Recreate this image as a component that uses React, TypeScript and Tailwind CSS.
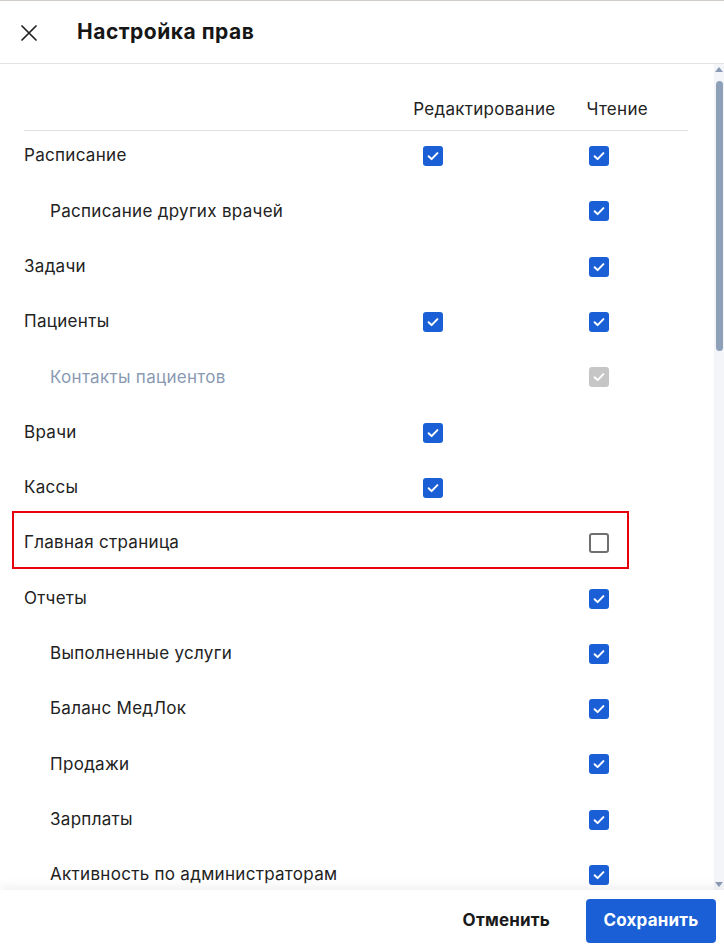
type Mark = 'on' | 'off' | 'disabled' | null;

interface PermRow {
  label: string;
  sub?: boolean;
  muted?: boolean;
  edit: Mark;
  read: Mark;
  highlight?: boolean;
}

const ROWS: PermRow[] = [
  { label: 'Расписание', edit: 'on', read: 'on' },
  { label: 'Расписание других врачей', sub: true, edit: null, read: 'on' },
  { label: 'Задачи', edit: null, read: 'on' },
  { label: 'Пациенты', edit: 'on', read: 'on' },
  { label: 'Контакты пациентов', sub: true, muted: true, edit: null, read: 'disabled' },
  { label: 'Врачи', edit: 'on', read: null },
  { label: 'Кассы', edit: 'on', read: null },
  { label: 'Главная страница', edit: null, read: 'off', highlight: true },
  { label: 'Отчеты', edit: null, read: 'on' },
  { label: 'Выполненные услуги', sub: true, edit: null, read: 'on' },
  { label: 'Баланс МедЛок', sub: true, edit: null, read: 'on' },
  { label: 'Продажи', sub: true, edit: null, read: 'on' },
  { label: 'Зарплаты', sub: true, edit: null, read: 'on' },
  { label: 'Активность по администраторам', sub: true, edit: null, read: 'on' },
];

function Check({ mark }: { mark: Mark }) {
  if (!mark) return null;
  if (mark === 'off') {
    return <span className="block h-[20px] w-[20px] rounded-[3px] border-2 border-[#6f6f6f] bg-white" />;
  }
  return (
    <span className={`flex h-[20px] w-[20px] items-center justify-center rounded-[3px] ${mark === 'on' ? 'bg-[#1b5fd6]' : 'bg-[#c6c6c6]'}`}>
      <svg width="14" height="14" viewBox="0 0 14 14" fill="none">
        <path d="M2.6 7.2l3 2.9 5.8-6" stroke="white" strokeWidth="2" strokeLinecap="round" strokeLinejoin="round" />
      </svg>
    </span>
  );
}

export default function App() {
  return (
    <div className="relative flex h-[952px] w-[724px] flex-col overflow-hidden border-t border-[#cfcac5] bg-white text-[#1f1f1f]" style={{ fontFamily: 'Inter, "Noto Sans", sans-serif' }}>
      <div className="flex h-[63px] shrink-0 items-center border-b border-[#e2e2e2] pl-[21px]">
        <svg width="16" height="16" viewBox="0 0 16 16" fill="none" className="mt-[1px]">
          <path d="M1 1l14 14M15 1L1 15" stroke="#222" strokeWidth="1.7" strokeLinecap="round" />
        </svg>
        <h1 className="ml-[40px] text-[21px] font-bold tracking-[0.5px] text-[#161616]">Настройка прав</h1>
      </div>

      <div className="relative flex min-h-0 flex-1">
        <div className="min-w-0 flex-1 overflow-hidden pl-[24px] pr-[26px] text-[17px] tracking-[0.3px]">
          <div className="flex h-[67px] items-end justify-end gap-[31px] border-b border-[#e0e0e0] pb-[8px] pr-[40px] text-[#222]">
            <span>Редактирование</span>
            <span>Чтение</span>
          </div>
          <div className="-mt-[2.5px]">
            {ROWS.map((row) => (
              <div key={row.label} className="relative flex h-[55.3px] items-center">
                {row.highlight && <div className="pointer-events-none absolute left-[-12px] right-[59px] top-[-4.5px] bottom-[2px] border-2 border-[#e8000b]" />}
                <div className={`flex-1 ${row.sub ? 'pl-[26px]' : ''} ${row.muted ? 'text-[#8a9ab3]' : 'text-[#222]'}`}>{row.label}</div>
                <div className="flex w-[66px] justify-center">
                  <Check mark={row.edit} />
                </div>
                <div className="w-[100px]" />
                <div className="flex w-[66px] justify-center">
                  <Check mark={row.read} />
                </div>
                <div className="w-[56px]" />
              </div>
            ))}
          </div>
        </div>

        <div className="flex w-[10px] shrink-0 flex-col items-center bg-[#f3f5f9] py-[3px]">
          <span className="h-0 w-0 border-x-[4px] border-b-[5px] border-x-transparent border-b-[#8a9bb5]" />
          <span className="mt-[9px] h-[270px] w-[7px] rounded-full bg-[#8ea0b8]" />
          <span className="mt-auto h-0 w-0 border-x-[4px] border-t-[5px] border-x-transparent border-t-[#8a9bb5]" />
        </div>
      </div>

      <div className="relative z-10 flex h-[62px] shrink-0 items-center justify-end gap-[36px] bg-white pr-[8px] text-[17px] font-bold tracking-[0.2px] shadow-[0_-4px_10px_rgba(0,0,0,0.06)]">
        <button className="text-[#1a1a1a]">Отменить</button>
        <button className="h-[44px] w-[130px] rounded-[4px] bg-[#1b5fd6] text-white">Сохранить</button>
      </div>
    </div>
  );
}
